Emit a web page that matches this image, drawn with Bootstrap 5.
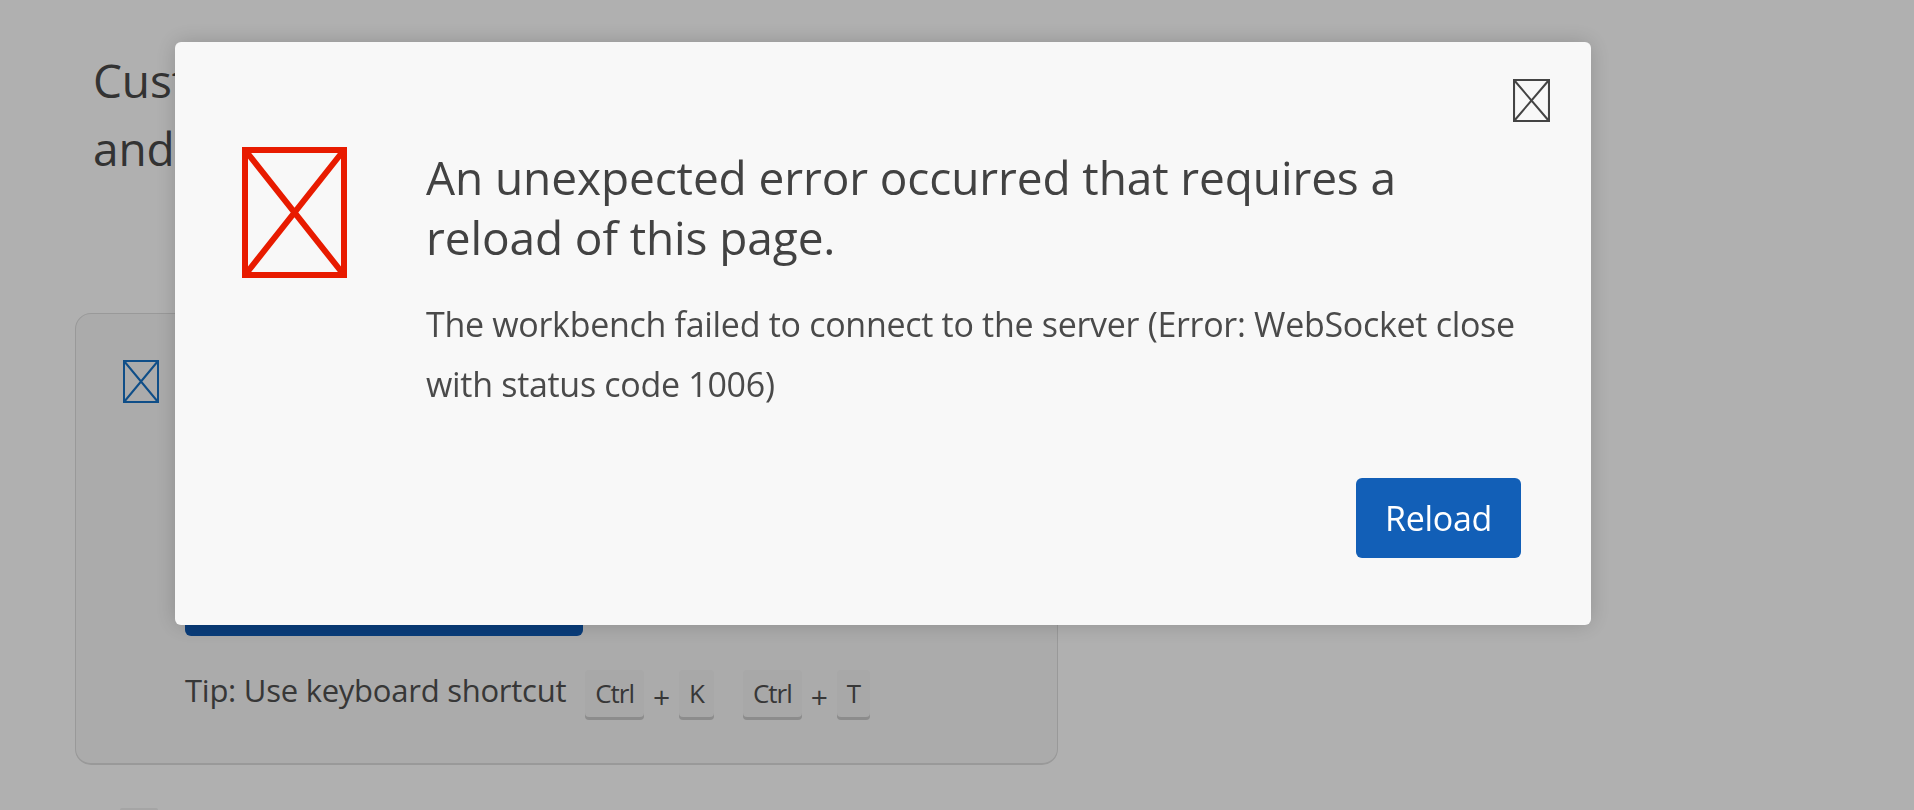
<!DOCTYPE html>
<html lang="en">
<head>
    <meta charset="UTF-8">
    <meta name="viewport" content="width=device-width, initial-scale=1.0">
    <title>Workbench</title>
    <link href="https://cdn.jsdelivr.net/npm/bootstrap@5.3.2/dist/css/bootstrap.min.css" rel="stylesheet">
    <style>
        html, body { height: 100%; overflow: hidden; }
        body { background: #fff; color: #4a4a4a; font-family: "Open Sans", "Noto Sans", sans-serif; }
        .tofu { display: block; flex: none; fill: none; stroke: currentColor; }
        .page-wrap { height: 810px; overflow: hidden; padding: 46px 0 0 75px; width: 1058px; }
        .intro-text { font-size: 46px; line-height: 68px; margin: 0 0 131px 18px; letter-spacing: -.15px; }
        .start-box { height: 452px; background: #f8f8f8; border: 1px solid #dedede; border-bottom-width: 2px; border-radius: 16px; padding: 46px 0 0 47px; gap: 26px; }
        .start-icon { width: 36px; height: 43px; color: #1772c6; }
        .start-btn { width: 398px; height: 75px; margin-top: 201px; background: #0e58b1; border-radius: 6px; }
        .tip-row { margin-top: 29px; font-size: 31px; letter-spacing: -.25px; line-height: 50px; color: #505050; }
        .tip-label { margin: 0 19px 10px 0; }
        .key-cap { display: inline-block; height: 50px; line-height: 46px; padding: 0 10px; font-size: 26px; letter-spacing: -1px; background: #f3f3f3; border-radius: 4px; box-shadow: inset 0 -3px 0 #cbcbcb; }
        .key-plus { margin: 4px 9px 0; font-size: 30px; }
        .key-gap { width: 29px; }
        .below-mark { width: 38px; height: 2px; margin: 43px 0 0 45px; background: #efefef; border-radius: 3px 3px 0 0; }
        .dim-layer { background: rgba(0, 0, 0, .31); }
        .error-box { position: absolute; left: 175px; top: 42px; width: 1416px; height: 583px; background: #f8f8f8; border-radius: 6px; box-shadow: 0 0 22px rgba(0, 0, 0, .18); padding: 105px 70px 0 67px; }
        .close-icon { position: absolute; top: 37px; right: 41px; width: 37px; height: 43px; color: #444; }
        .error-icon { width: 105px; height: 131px; color: #e81b00; margin-right: 79px; }
        .error-title { font-size: 46px; line-height: 60px; font-weight: 400; color: #424242; margin: 0 0 27px; letter-spacing: -.1px; }
        .error-text { font-size: 34px; line-height: 60px; color: #4a4a4a; margin: 0; letter-spacing: -.3px; }
        .reload-btn { width: 165px; height: 80px; margin-top: 64px; background: #125fb7; border: 0; border-radius: 6px; color: #fff; font-size: 34px; padding: 0; letter-spacing: -.3px; }
    </style>
</head>
<body>

    <div class="page-wrap">
        <p class="intro-text">Customize<br>and</p>
        <div class="start-box d-flex">
            <svg class="tofu start-icon" viewBox="0 0 36 43" preserveAspectRatio="none" stroke-width="2"><path d="M1 1H35V42H1ZM1 1L35 42M35 1L1 42"/></svg>
            <div>
                <div class="start-btn"></div>
                <div class="tip-row d-flex align-items-center">
                    <span class="tip-label">Tip: Use keyboard shortcut</span>
                    <span class="key-cap">Ctrl</span><span class="key-plus">+</span><span class="key-cap">K</span>
                    <span class="key-gap"></span>
                    <span class="key-cap">Ctrl</span><span class="key-plus">+</span><span class="key-cap">T</span>
                </div>
            </div>
        </div>
        <div class="below-mark"></div>
    </div>

    <div class="dim-layer position-fixed top-0 start-0 w-100 h-100">
        <div class="error-box">
            <svg class="tofu close-icon" viewBox="0 0 36 43" preserveAspectRatio="none" stroke-width="2"><path d="M1 1H35V42H1ZM1 1L35 42M35 1L1 42"/></svg>
            <div class="d-flex">
                <svg class="tofu error-icon" viewBox="0 0 105 131" preserveAspectRatio="none" stroke-width="6"><path d="M3 3H102V128H3ZM3 3L102 128M102 3L3 128"/></svg>
                <div>
                    <h1 class="error-title">An unexpected error occurred that requires a<br>reload of this page.</h1>
                    <p class="error-text">The workbench failed to connect to the server (Error: WebSocket close<br>with status code 1006)</p>
                </div>
            </div>
            <div class="d-flex justify-content-end">
                <button type="button" class="btn reload-btn">Reload</button>
            </div>
        </div>
    </div>

    <script src="https://cdn.jsdelivr.net/npm/bootstrap@5.3.2/dist/js/bootstrap.bundle.min.js"></script>
</body>
</html>
